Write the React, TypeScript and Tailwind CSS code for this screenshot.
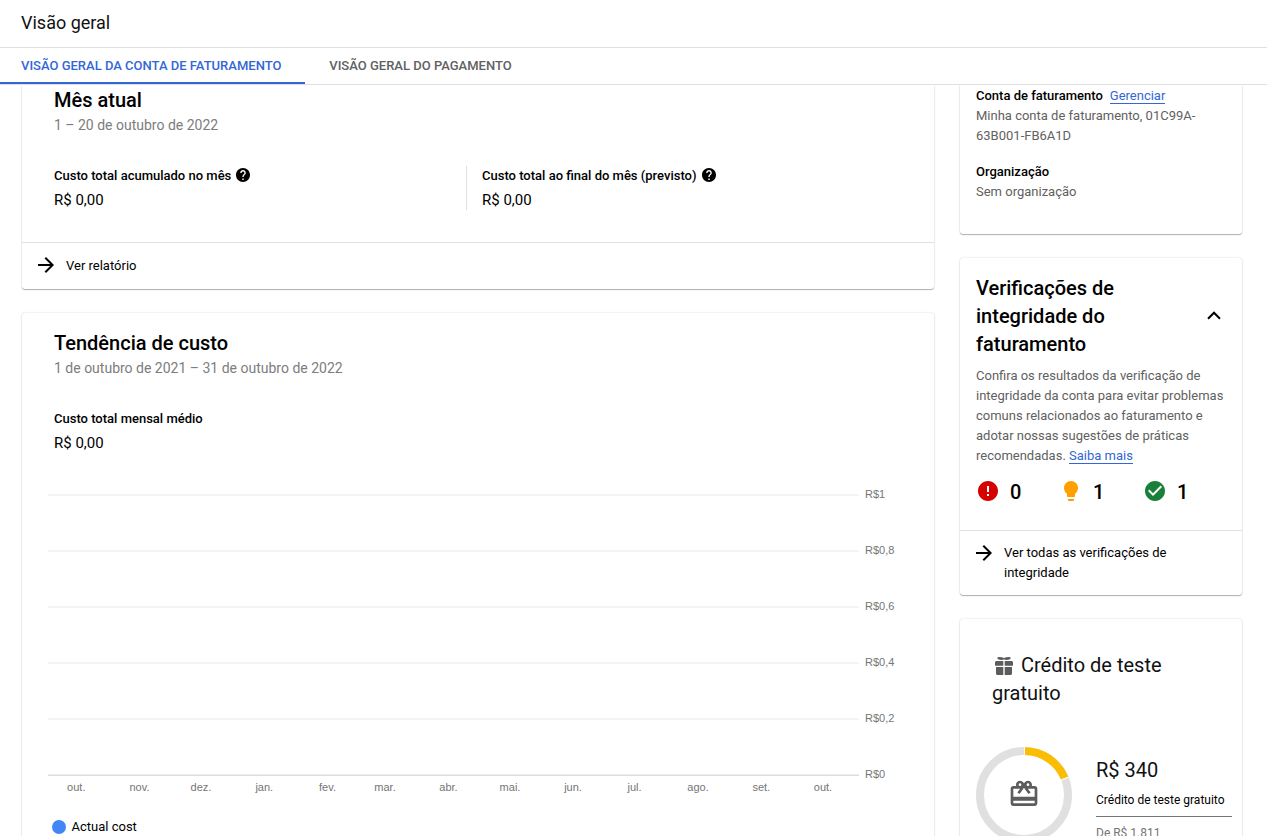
import React from "react";

const CARD =
  "bg-white shadow-[0_1px_1px_0_rgba(0,0,0,0.28),0_0_2px_0_rgba(0,0,0,0.18)]";

const yTicks = ["R$1", "R$0,8", "R$0,6", "R$0,4", "R$0,2", "R$0"];

const months: [string, number][] = [
  ["out.", 28.3],
  ["nov.", 91.5],
  ["dez.", 153],
  ["jan.", 216.3],
  ["fev.", 279.5],
  ["mar.", 337],
  ["abr.", 400.5],
  ["mai.", 462],
  ["jun.", 525],
  ["jul.", 586.5],
  ["ago.", 650],
  ["set.", 713.3],
  ["out.", 775],
];

function Arrow({ className = "" }: { className?: string }) {
  return (
    <svg viewBox="4 4 16 16" className={`size-4 shrink-0 ${className}`} fill="#000">
      <path d="M12 4l-1.41 1.41L16.17 11H4v2h12.17l-5.58 5.59L12 20l8-8z" />
    </svg>
  );
}

function Help() {
  return (
    <svg viewBox="2 2 20 20" className="mb-0.5 size-3.5 shrink-0" fill="#000">
      <path d="M12 2C6.48 2 2 6.48 2 12s4.48 10 10 10 10-4.48 10-10S17.52 2 12 2zm1 17h-2v-2h2v2zm2.07-7.75l-.9.92C13.45 12.9 13 13.5 13 15h-2v-.5c0-1.1.45-2.1 1.17-2.83l1.24-1.26c.37-.36.59-.86.59-1.41 0-1.1-.9-2-2-2s-2 .9-2 2H8c0-2.21 1.79-4 4-4s4 1.79 4 4c0 .88-.36 1.68-.93 2.25z" />
    </svg>
  );
}

function Chart() {
  return (
    <svg className="ml-[26px] block h-[316px] w-[880px]" fontFamily="Liberation Sans, Arial, sans-serif" fontSize="11" fill="#757575">
      {yTicks.map((label, i) => (
        <g key={label}>
          <rect x="0" y={9 + i * 56} width="811" height="2" fill={i === 5 ? "#ededed" : "#f4f4f4"} />
          {i === 5 && <rect x="0" y="290" width="811" height="1" fill="#dcdcdc" />}
          <text x="817" y={13 + i * 56}>{label}</text>
        </g>
      ))}
      {months.map(([label, x], i) => (
        <text key={i} x={x} y="306" textAnchor="middle">{label}</text>
      ))}
    </svg>
  );
}

export default function App() {
  return (
    <div className="flex h-[836px] w-[1267px] flex-col overflow-hidden bg-white font-[Roboto,sans-serif] text-[13px] leading-5 text-black">
      <header className="flex h-12 shrink-0 items-center border-b border-[#e0e0e0] pl-[21px] pb-0.5 text-lg text-[#111]">
        Visão geral
      </header>
      <nav className="flex h-[37px] shrink-0 border-b border-[#e0e0e0] text-[13px] font-medium">
        <div className="flex w-[305px] items-center border-b-2 border-[#3367d6] pt-0.5 pl-[21px] text-[#3367d6]">VISÃO GERAL DA CONTA DE FATURAMENTO</div>
        <div className="flex items-center border-b-2 border-transparent pt-0.5 pl-[24.3px] text-[#616161]">VISÃO GERAL DO PAGAMENTO</div>
      </nav>
      <div className="flex min-h-0 grow items-start gap-[26px] overflow-hidden pl-[22px]">
        <main className="flex w-[912px] shrink-0 flex-col gap-[24px]">
          <section className={`rounded-b-[3px] ${CARD}`}>
            <div className="h-[157px] px-8 pt-px">
              <h2 className="text-xl leading-7 font-medium">Mês atual</h2>
              <p className="pt-px text-sm leading-5 text-[#7d7d7d]">1 – 20 de outubro de 2022</p>
              <div className="mt-[31px] flex h-11">
                <div className="w-[412px]">
                  <div className="flex items-center gap-[5px] leading-5 font-medium">Custo total acumulado no mês <Help /></div>
                  <div className="pt-1 text-[15px] leading-5">R$ 0,00</div>
                </div>
                <div className="border-l border-[#e0e0e0] pl-[15px]">
                  <div className="flex items-center gap-[5px] leading-5 font-medium">Custo total ao final do mês (previsto) <Help /></div>
                  <div className="pt-1 text-[15px] leading-5">R$ 0,00</div>
                </div>
              </div>
            </div>
            <div className="flex h-[47px] items-center gap-3 border-t border-[#e0e0e0] pl-4">
              <Arrow className="mb-0.5" />
              <span>Ver relatório</span>
            </div>
          </section>
          <section className={`h-[620px] rounded-[3px] ${CARD}`}>
            <div className="px-8 pt-4">
              <h2 className="text-xl leading-7 font-medium">Tendência de custo</h2>
              <p className="pt-px text-sm leading-5 text-[#7d7d7d]">1 de outubro de 2021 – 31 de outubro de 2022</p>
              <div className="pt-[31px] leading-5 font-medium">Custo total mensal médio</div>
              <div className="pt-1 text-[15px] leading-5">R$ 0,00</div>
            </div>
            <div className="h-8" />
            <Chart />
            <div className="mt-4 flex items-center gap-[5.5px] pl-[30px]">
              <span className="size-3.5 rounded-full bg-[#4285f4]" />
              <span>Actual cost</span>
            </div>
          </section>
        </main>
        <aside className="flex w-[282px] shrink-0 flex-col gap-[24px]">
          <section className={`h-[149px] rounded-b-[3px] px-4 pt-px ${CARD}`}>
            <div className="flex items-center gap-[7px]">
              <span className="font-medium">Conta de faturamento</span>
              <a className="border-b border-[#3367d6] leading-[15px] text-[#3367d6]">Gerenciar</a>
            </div>
            <p className="text-[#616161]">Minha conta de faturamento, 01C99A-<br />63B001-FB6A1D</p>
            <p className="pt-4 font-medium">Organização</p>
            <p className="text-[#616161]">Sem organização</p>
          </section>
          <section className={`rounded-[3px] ${CARD}`}>
            <div className="h-[272px] px-4 pt-4">
              <div className="flex items-center justify-between pr-[5px]">
                <h2 className="w-[180px] text-xl leading-7 font-medium">Verificações de integridade do faturamento</h2>
                <svg viewBox="0 0 14 9" className="mb-0.5 h-[9px] w-[14px]" fill="none" stroke="#000" strokeWidth="2">
                  <path d="M1 7.7L7 1.7l6 6" />
                </svg>
              </div>
              <p className="pt-2 whitespace-nowrap text-[#616161]">
                Confira os resultados da verificação de<br />integridade da conta para evitar problemas<br />comuns relacionados ao faturamento e<br />adotar nossas sugestões de práticas<br />recomendadas. <a className="border-b border-[#3367d6] text-[#3367d6]">Saiba mais</a>
              </p>
              <div className="flex pt-3 text-xl leading-7 font-medium">
                <div className="flex w-[84px] items-center gap-3 pl-[2px]">
                  <svg viewBox="2 2 20 20" className="mb-[3px] size-5" fill="#d50000">
                    <path d="M12 2C6.48 2 2 6.48 2 12s4.48 10 10 10 10-4.48 10-10S17.52 2 12 2zm1 15h-2v-2h2v2zm0-4h-2V7h2v6z" />
                  </svg>
                  0
                </div>
                <div className="flex w-[83px] items-center gap-[15px] pl-[4px]">
                  <svg viewBox="5 2 14 20" className="mb-[3px] h-5 w-[14px]" fill="#ffa000">
                    <path d="M9 21c0 .55.45 1 1 1h4c.55 0 1-.45 1-1v-1H9v1zm3-19C8.14 2 5 5.14 5 9c0 2.38 1.19 4.47 3 5.74V17c0 .55.45 1 1 1h6c.55 0 1-.45 1-1v-2.26c1.81-1.27 3-3.36 3-5.74 0-3.86-3.14-7-7-7z" />
                  </svg>
                  1
                </div>
                <div className="flex items-center gap-3 pl-[2px]">
                  <svg viewBox="2 2 20 20" className="mb-[3px] size-5" fill="#188038">
                    <path d="M12 2C6.48 2 2 6.48 2 12s4.48 10 10 10 10-4.48 10-10S17.52 2 12 2zm-2 15l-5-5 1.41-1.41L10 14.17l7.59-7.59L19 8l-9 9z" />
                  </svg>
                  1
                </div>
              </div>
            </div>
            <div className="flex h-[65px] items-start gap-3 border-t border-[#e0e0e0] pt-3 pl-4">
              <Arrow className="mt-[2px]" />
              <span className="w-[190px]">Ver todas as verificações de integridade</span>
            </div>
          </section>
          <section className={`h-[400px] rounded-[3px] pt-8 ${CARD}`}>
            <h2 className="w-[230px] pl-8 text-xl leading-7 text-[#111]">
              <svg viewBox="0 0 18 18" className="mr-2 ml-[3px] inline-block size-[18px] align-[-3px]" fill="#5c5c5c">
                <path d="M1.500 4H8.300v4.800H0v-3.300C0 4.600.6 4 1.500 4zM9.700 4h6.800c.9 0 1.500.6 1.500 1.500v3.300H9.700zM1 10h7.300v8H2.500C1.600 18 1 17.400 1 16.500zM9.700 10H17v6.500c0 .9-.6 1.500-1.500 1.500H9.700zM2.500.3Q5.500-.3 9 .9 12.500-.3 15.500.3V2Q12 3.600 9 2.600 6 3.600 2.500 2z" />
              </svg>
              Crédito de teste gratuito
            </h2>
            <div className="mt-10 flex pl-4">
              <svg viewBox="0 0 96 96" className="size-24 shrink-0" fill="none">
                <circle cx="48" cy="48" r="44" stroke="#e0e0e0" strokeWidth="8" />
                <path d="M48 4A44 44 0 0 1 88.800 32.300" stroke="#fff" strokeWidth="8" />
                <path d="M49 4A44 44 0 0 1 88.600 31" stroke="#fbbc04" strokeWidth="8" />
                <g transform="translate(32 31) scale(1.333)">
                  <path fill="#5c5c5c" d="M20 6h-2.180c.11-.31.18-.65.18-1 0-1.660-1.340-3-3-3-1.050 0-1.960.54-2.500 1.350l-.5.670-.5-.680C10.960 2.540 10.050 2 9 2 7.340 2 6 3.340 6 5c0 .35.070.69.180 1H4c-1.110 0-1.990.89-1.990 2L2 19c0 1.110.89 2 2 2h16c1.110 0 2-.89 2-2V8c0-1.110-.89-2-2-2zm-5-2c.55 0 1 .45 1 1s-.45 1-1 1-1-.45-1-1 .45-1 1-1zM9 4c.55 0 1 .45 1 1s-.45 1-1 1-1-.45-1-1 .45-1 1-1zm11 15H4v-2h16v2zm0-5H4V8h5.080L7 10.830 8.620 12 11 8.760l1-1.360 1 1.360L15.380 12 17 10.830 14.920 8H20v6z" />
                </g>
              </svg>
              <div className="ml-6 w-[136px]">
                <div className="pt-[9px] text-xl leading-7 text-[#111]">R$ 340</div>
                <div className="border-b border-[#757575] pt-[6px] pb-[6px] text-xs leading-5 whitespace-nowrap">Crédito de teste gratuito</div>
                <div className="pt-[6px] text-xs leading-5 text-[#757575]">De R$ 1.811</div>
              </div>
            </div>
          </section>
        </aside>
      </div>
    </div>
  );
}
